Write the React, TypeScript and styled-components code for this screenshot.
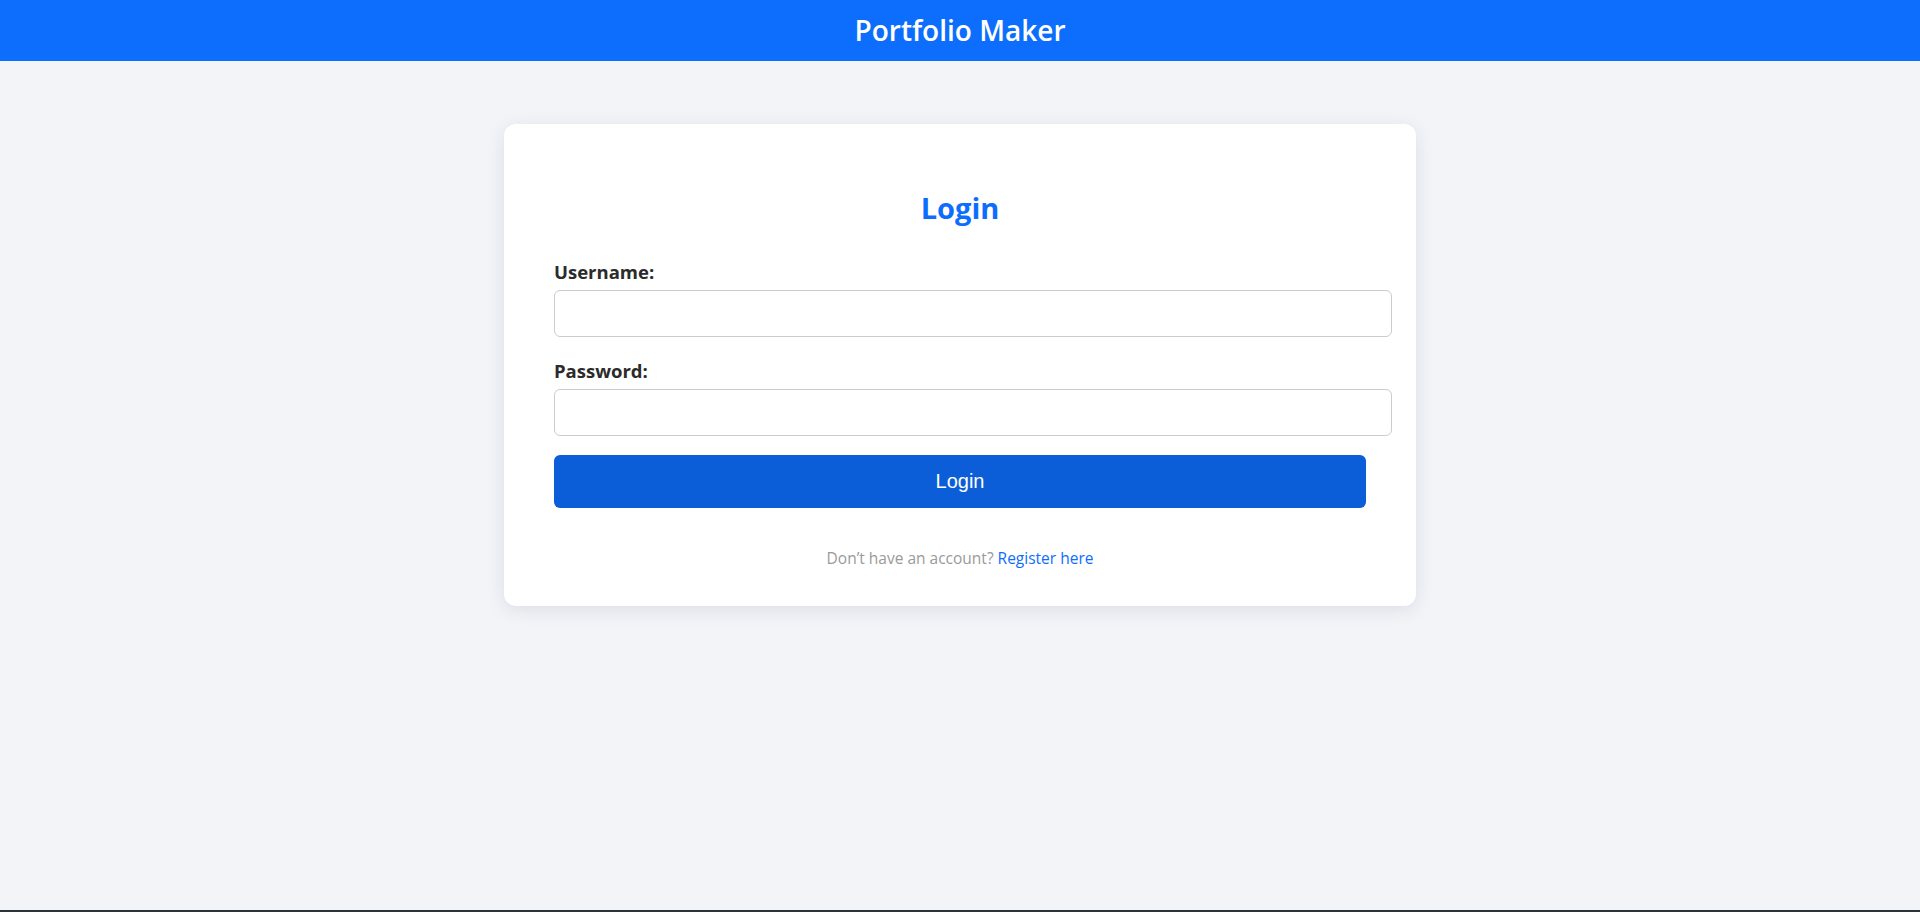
import React, { useState } from 'react';
import styled, { createGlobalStyle } from 'styled-components';

const GlobalStyle = createGlobalStyle`
  * {
    box-sizing: border-box;
  }
  body {
    margin: 0;
    background: #f3f4f8;
    font-family: 'Open Sans', 'Noto Sans', sans-serif;
    color: #333;
  }
`;

const Page = styled.div`
  display: flex;
  flex-direction: column;
  min-height: 100vh;
  border-bottom: 2px solid #2c323a;
`;

const Header = styled.header`
  display: flex;
  justify-content: center;
  align-items: center;
  height: 61px;
  background: #0d6efd;
`;

const HeaderTitle = styled.h1`
  margin: 0;
  font-size: 28px;
  font-weight: 600;
  line-height: 61px;
  color: #fff;
`;

const Main = styled.main`
  display: flex;
  justify-content: center;
  padding-top: 63px;
`;

const Card = styled.div`
  width: 912px;
  padding: 67px 50px 38px;
  background: #fff;
  border-radius: 12px;
  box-shadow: 0 4px 18px rgba(30, 40, 70, 0.1);
`;

const Title = styled.h2`
  margin: 0 0 35px;
  font-size: 29px;
  font-weight: 700;
  line-height: 34px;
  text-align: center;
  color: #0d6efd;
`;

const Form = styled.form`
  display: flex;
  flex-direction: column;
`;

const Field = styled.div`
  display: flex;
  flex-direction: column;
  margin-bottom: ${(p: { $last?: boolean }) => (p.$last ? '19px' : '22px')};
`;

const Label = styled.label`
  font-size: 18.5px;
  font-weight: 700;
  line-height: 24px;
  margin-bottom: 6px;
  color: #2b2b2b;
`;

const Input = styled.input`
  box-sizing: content-box;
  width: 100%;
  height: 21px;
  padding: 12px;
  border: 1px solid #ccc;
  border-radius: 6px;
  font-size: 16px;
  font-family: 'Open Sans', sans-serif;
  outline: none;
`;

const SubmitButton = styled.button`
  width: 100%;
  padding: 15px;
  border: none;
  border-radius: 6px;
  background: #0b5ed7;
  color: #fff;
  font-family: 'Liberation Sans', Arial, sans-serif;
  font-size: 20px;
  cursor: pointer;
`;

const FooterText = styled.p`
  margin: 40px 0 0;
  font-size: 15.5px;
  line-height: 20px;
  text-align: center;
  color: #9a9a9a;
`;

const RegisterLink = styled.a`
  color: #0d6efd;
  text-decoration: none;
`;

const App = () => {
  const [username, setUsername] = useState<string>('');
  const [password, setPassword] = useState<string>('');

  return (
    <>
      <GlobalStyle />
      <Page>
        <Header>
          <HeaderTitle>Portfolio Maker</HeaderTitle>
        </Header>
        <Main>
          <Card>
            <Title>Login</Title>
            <Form onSubmit={(e) => e.preventDefault()}>
              <Field>
                <Label htmlFor='username'>Username:</Label>
                <Input id='username' type='text' value={username} onChange={(e) => setUsername(e.target.value)} />
              </Field>
              <Field $last>
                <Label htmlFor='password'>Password:</Label>
                <Input id='password' type='password' value={password} onChange={(e) => setPassword(e.target.value)} />
              </Field>
              <SubmitButton type='submit'>Login</SubmitButton>
            </Form>
            <FooterText>
              Don’t have an account? <RegisterLink href='#'>Register here</RegisterLink>
            </FooterText>
          </Card>
        </Main>
      </Page>
    </>
  );
};

export default App;
